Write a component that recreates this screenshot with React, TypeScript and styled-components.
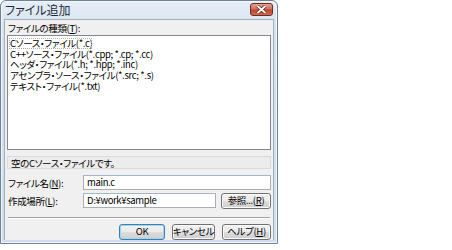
import * as React from "react";
import styled, { createGlobalStyle } from "styled-components";

const GlobalStyle = createGlobalStyle`
  html, body {
    margin: 0;
    padding: 0;
    background: #ffffff;
  }
  body {
    font-family: "Noto Sans CJK JP", "Liberation Sans", sans-serif;
    font-feature-settings: "palt";
  }
`;

const fileTypes = [
  "Cソース・ファイル(*.c)",
  "C++ソース・ファイル(*.cpp; *.cp; *.cc)",
  "ヘッダ・ファイル(*.h; *.hpp; *.inc)",
  "アセンブラ・ソース・ファイル(*.src; *.s)",
  "テキスト・ファイル(*.txt)",
];

const App = () => {
  return (
    <>
      <GlobalStyle />
      <SWindow>
        <STitleBar>
          <STitle>ファイル追加</STitle>
          <SCloseButton>
            <svg width="11" height="9" viewBox="0 0 11 9">
              <path d="M1.5 1 L9.5 8 M9.5 1 L1.5 8" stroke="#5a1a10" strokeWidth="3.2" />
              <path d="M1.5 1 L9.5 8 M9.5 1 L1.5 8" stroke="#ffffff" strokeWidth="1.8" />
            </svg>
          </SCloseButton>
        </STitleBar>
        <SClient>
          <SLabel>
            ファイルの種類(<u>T</u>):
          </SLabel>
          <SList>
            {fileTypes.map((t, i) => (
              <SListItem key={t} focused={i === 0}>
                {t}
              </SListItem>
            ))}
          </SList>
          <SDescription>空のCソース・ファイルです。</SDescription>
          <SFormRow>
            <SRowLabel>
              ファイル名(<u>N</u>):
            </SRowLabel>
            <SInput>main.c</SInput>
          </SFormRow>
          <SFormRow>
            <SRowLabel>
              作成場所(<u>L</u>):
            </SRowLabel>
            <SInput>D:¥work¥sample</SInput>
            <SButton width={50}>
              参照...(<u>R</u>)
            </SButton>
          </SFormRow>
          <SSeparator />
          <SButtonBar>
            <SButton width={46} primary>
              OK
            </SButton>
            <SButton width={43}>キャンセル</SButton>
            <SButton width={49}>
              ヘルプ(<u>H</u>)
            </SButton>
          </SButtonBar>
        </SClient>
      </SWindow>
    </>
  );
};

export default App;

const SWindow = styled.div`
  width: 278px;
  height: 244px;
  box-sizing: border-box;
  border: 1px solid #6f8196;
  border-radius: 6px 6px 0 0;
  background: linear-gradient(#e6eef7, #d4e1ef 30px, #cfdded);
  display: flex;
  flex-direction: column;
  box-shadow: inset 0 0 0 1px #f4f8fc;
`;

const STitleBar = styled.div`
  height: 21px;
  display: flex;
  align-items: center;
  justify-content: space-between;
  padding: 0 4px 0 4px;
  box-sizing: border-box;
`;

const STitle = styled.span`
  font-size: 12px;
  color: #1e2a3a;
  line-height: 1;
  margin-top: -1px;
`;

const SCloseButton = styled.div`
  width: 23px;
  height: 13px;
  margin-top: -2px;
  box-sizing: border-box;
  border: 1px solid #6b2a20;
  border-radius: 3px;
  background: linear-gradient(#e8a394, #d0705c 45%, #c0452d 55%, #d06a50);
  display: flex;
  align-items: center;
  justify-content: center;
`;

const SClient = styled.div`
  flex: 1;
  margin: 0 3px 3px 3px;
  background: #f0f0f0;
  border: 1px solid #a0afc2;
  border-bottom: none;
  padding: 2px 2px 0 2px;
  display: flex;
  flex-direction: column;
  font-size: 9.5px;
  letter-spacing: -0.35px;
  color: #000;
`;

const SLabel = styled.div`
  height: 13px;
  line-height: 13px;
  padding-left: 1px;
`;

const SList = styled.div`
  height: 115px;
  box-sizing: border-box;
  border: 1px solid #828790;
  background: #fff;
  padding: 2px 1px;
  margin-bottom: 4px;
`;

const SListItem = styled.div<{ focused?: boolean }>`
  height: 10.7px;
  line-height: 10.7px;
  padding-left: 1px;
  width: fit-content;
  outline: ${(p) => (p.focused ? "1px dotted #b0b0b0" : "none")};
  outline-offset: -1px;
`;

const SDescription = styled.div`
  height: 13px;
  line-height: 12px;
  box-sizing: border-box;
  border: 1px solid #dadada;
  background: #ececec;
  padding-left: 3px;
  margin: 2px 0 6px 0;
`;

const SFormRow = styled.div`
  height: 15px;
  display: flex;
  align-items: center;
  gap: 5px;
  margin-bottom: 3px;
`;

const SRowLabel = styled.div`
  width: 70px;
  padding-left: 1px;
`;

const SInput = styled.div`
  flex: 1;
  height: 15px;
  box-sizing: border-box;
  border: 1px solid #abadb3;
  border-top-color: #a4b5c8;
  background: #fff;
  padding-left: 3px;
  line-height: 13px;
`;

const SButton = styled.div<{ width: number; primary?: boolean }>`
  width: ${(p) => p.width}px;
  height: 16px;
  box-sizing: border-box;
  border: 1px solid ${(p) => (p.primary ? "#3c7fb1" : "#707070")};
  border-radius: 3px;
  background: linear-gradient(#f2f2f2, #ebebeb 50%, #dddddd 51%, #cfcfcf);
  box-shadow: inset 0 0 0 1px ${(p) => (p.primary ? "#9fd5f0" : "#fcfcfc")};
  display: flex;
  align-items: center;
  justify-content: center;
  white-space: nowrap;
  line-height: 1;
`;

const SSeparator = styled.div`
  height: 0;
  border-top: 1px solid #a0a0a0;
  border-bottom: 1px solid #ffffff;
  margin: 6px 1px 5px 1px;
`;

const SButtonBar = styled.div`
  display: flex;
  justify-content: flex-end;
  gap: 7px;
`;
